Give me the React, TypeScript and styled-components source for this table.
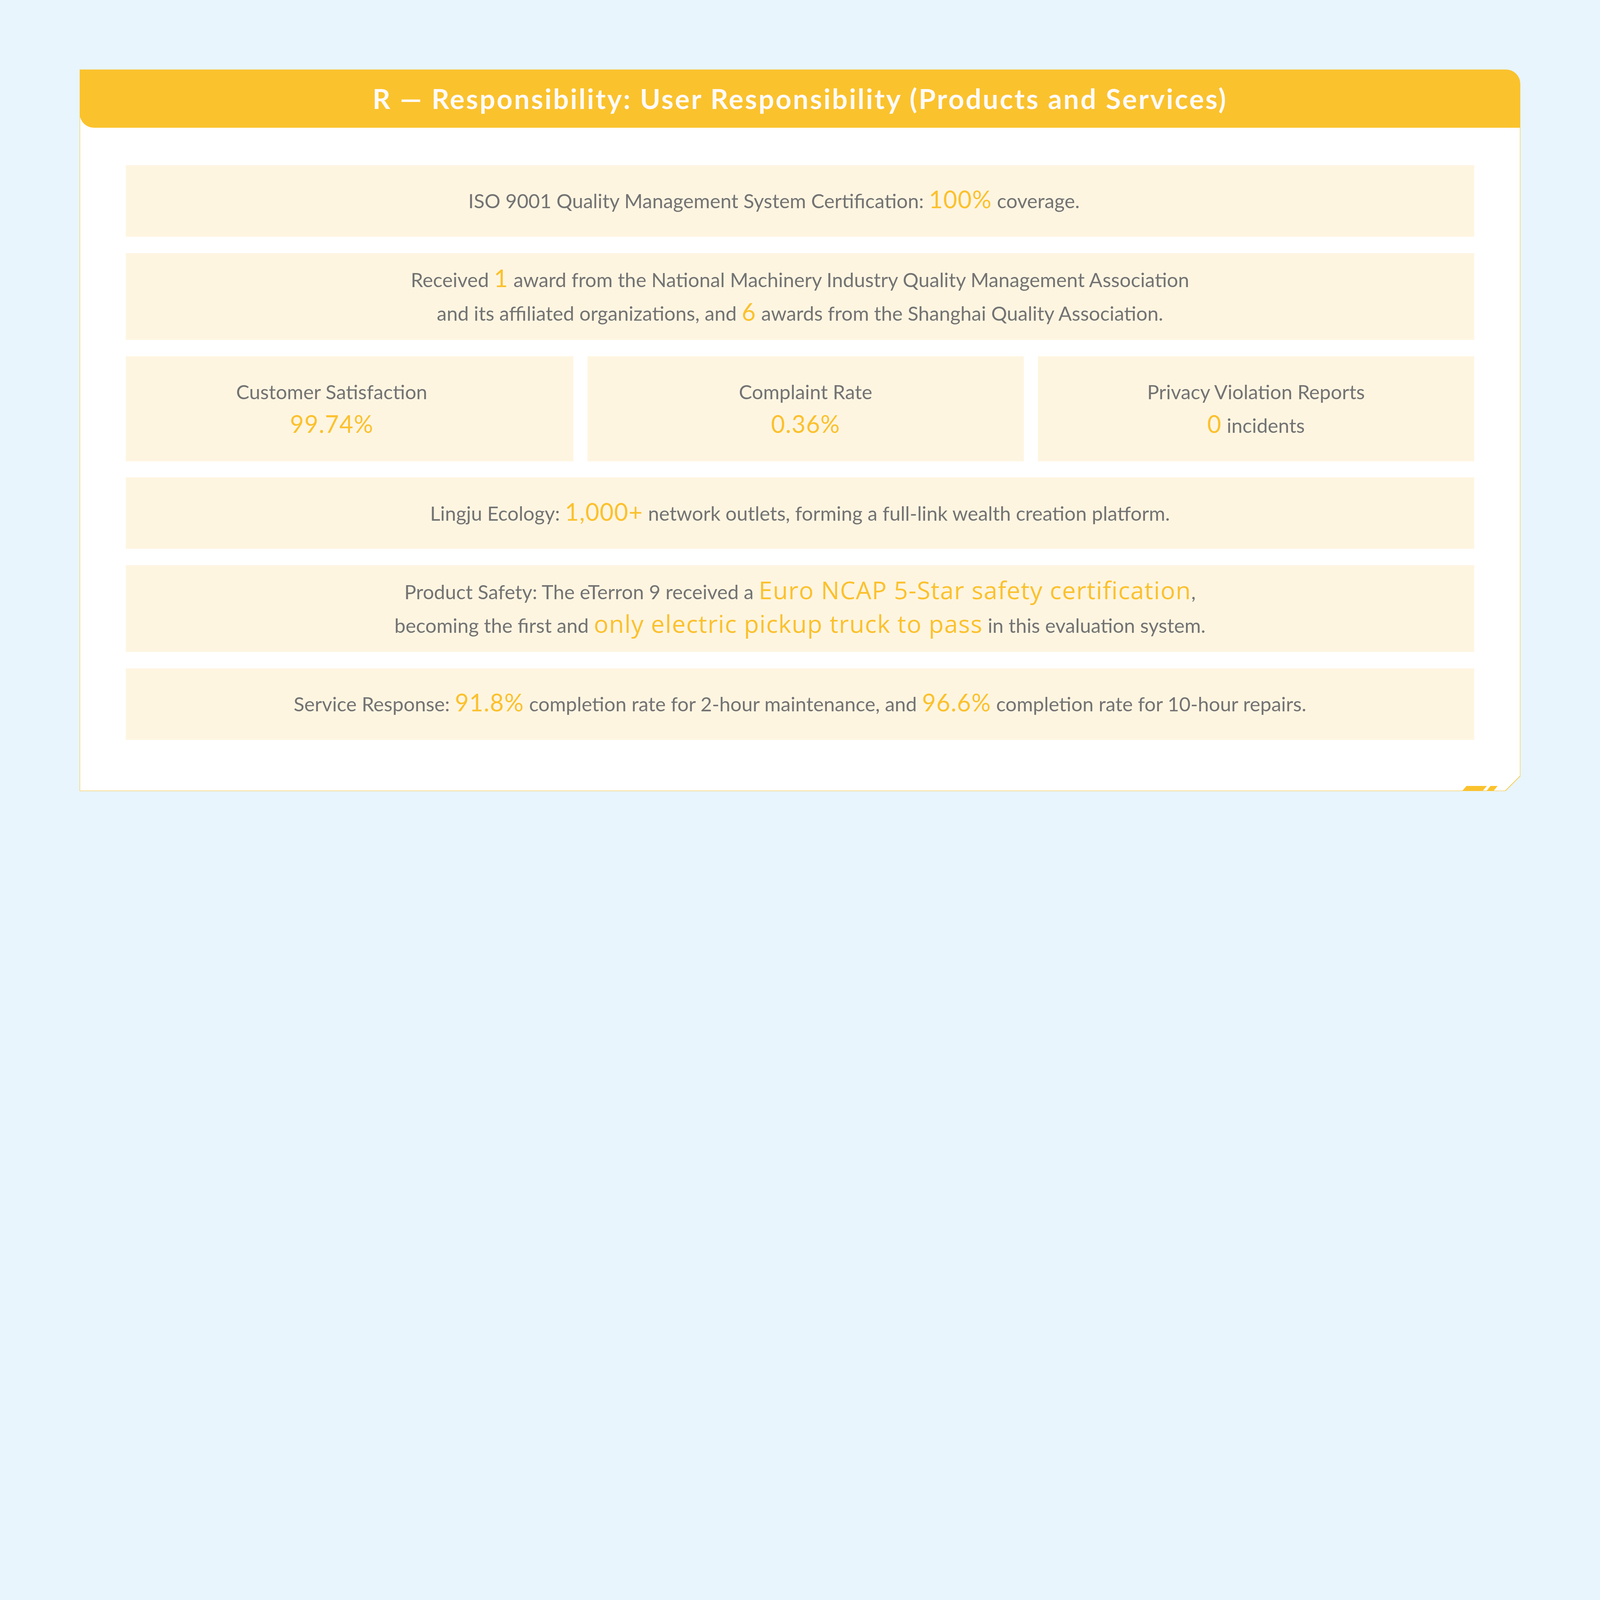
import { useEffect, useState } from "react";
import styled, { createGlobalStyle } from "styled-components";

const GlobalStyle = createGlobalStyle`
  html,
  body {
    margin: 0;
    padding: 0;
    background: #e8f5fd;
    overflow: hidden;
  }
  body {
    font-family: "Lato", "Noto Sans", sans-serif;
  }
`;

const BASE_WIDTH = 1568;

// The layout is drawn at 1568px and scaled to whatever width the window has.
const Page = styled.div`
  width: 1568px;
  height: 847px;
  box-sizing: border-box;
  padding: 68px 78px 0;
  background: #e8f5fd;
`;

const Card = styled.section`
  position: relative;
  width: 1412px;
  display: flex;
  flex-direction: column;
`;

const Header = styled.h2`
  position: relative;
  z-index: 1;
  margin: 0;
  height: 57px;
  display: flex;
  align-items: center;
  justify-content: center;
  background: #fac22d;
  border-radius: 0 14px 0 14px;
  color: #fffafa;
  font: 700 27px/1 "Lato", sans-serif;
  letter-spacing: 1.45px;
`;

const Body = styled.div`
  margin-top: -16px;
  padding: 53px 45px 50px;
  background: #ffffff;
  border: 0.3px solid #fac22d;
  border-top: none;
  clip-path: polygon(
    0 0,
    100% 0,
    100% calc(100% - 15px),
    calc(100% - 15px) 100%,
    0 100%
  );
  display: flex;
  flex-direction: column;
  gap: 16px;
`;

const Row = styled.div<{ $padRight?: number }>`
  min-height: 70px;
  box-sizing: border-box;
  padding: 9.5px ${(p) => p.$padRight ?? 20}px 9.5px 20px;
  display: flex;
  flex-direction: column;
  align-items: center;
  justify-content: center;
  background: #fef5e1;
  color: #737373;
  font-size: 19.4px;
  line-height: 33px;
  text-align: center;
`;

const Hi = styled.span<{ $word?: boolean }>`
  color: #fbc12d;
  font-size: ${(p) => (p.$word ? 24 : 23.5)}px;
  line-height: 1;
  font-family: ${(p) =>
    p.$word ? `"Open Sans", "Noto Sans", sans-serif` : "inherit"};
  letter-spacing: 0.5px;
`;

const StatGrid = styled.div`
  display: grid;
  grid-template-columns: 439fr 428fr 428fr;
  gap: 14px;
`;

const StatCell = styled.div<{ $padRight?: number }>`
  padding: 18.5px ${(p) => p.$padRight ?? 20}px 18.5px 20px;
  background: #fef5e1;
  color: #737373;
  font-size: 19.4px;
  line-height: 33px;
  text-align: center;
`;

const StatLabel = styled.div``;

const StatValue = styled.div``;

const Chamfer = styled.svg`
  position: absolute;
  right: 0;
  bottom: 0;
  width: 15px;
  height: 15px;
`;

const Stripes = styled.svg`
  position: absolute;
  left: 1355px;
  bottom: 0;
  width: 35px;
  height: 5px;
`;

function useFitZoom() {
  const read = () =>
    typeof document === "undefined"
      ? 1
      : document.documentElement.clientWidth / BASE_WIDTH;
  const [zoom, setZoom] = useState(read);
  useEffect(() => {
    const onResize = () => setZoom(read());
    window.addEventListener("resize", onResize);
    return () => window.removeEventListener("resize", onResize);
  }, []);
  return zoom;
}

export default function App() {
  const zoom = useFitZoom();
  return (
    <Page style={{ zoom }}>
      <GlobalStyle />
      <Card>
        <Header>R — Responsibility: User Responsibility (Products and Services)</Header>
        <Body>
          <Row $padRight={71}>
            <div>
              ISO 9001 Quality Management System Certification: <Hi>100%</Hi> coverage.
            </div>
          </Row>

          <Row>
            <div>
              Received <Hi>1</Hi> award from the National Machinery Industry Quality Management
              Association
            </div>
            <div>
              and its affiliated organizations, and <Hi>6</Hi> awards from the Shanghai Quality
              Association.
            </div>
          </Row>

          <StatGrid>
            <StatCell $padRight={55}>
              <StatLabel>Customer Satisfaction</StatLabel>
              <StatValue>
                <Hi>99.74%</Hi>
              </StatValue>
            </StatCell>
            <StatCell>
              <StatLabel>Complaint Rate</StatLabel>
              <StatValue>
                <Hi>0.36%</Hi>
              </StatValue>
            </StatCell>
            <StatCell>
              <StatLabel>Privacy Violation Reports</StatLabel>
              <StatValue>
                <Hi>0</Hi> incidents
              </StatValue>
            </StatCell>
          </StatGrid>

          <Row>
            <div>
              Lingju Ecology: <Hi>1,000+</Hi> network outlets, forming a full-link wealth creation
              platform.
            </div>
          </Row>

          <Row>
            <div>
              Product Safety: The eTerron 9 received a{" "}
              <Hi $word>Euro NCAP 5-Star safety certification</Hi>,
            </div>
            <div>
              becoming the first and <Hi $word>only electric pickup truck to pass</Hi> in this
              evaluation system.
            </div>
          </Row>

          <Row>
            <div>
              Service Response: <Hi>91.8%</Hi> completion rate for 2-hour maintenance, and{" "}
              <Hi>96.6%</Hi> completion rate for 10-hour repairs.
            </div>
          </Row>
        </Body>

        <Chamfer viewBox="0 0 15 15">
          <line x1="15" y1="0" x2="0" y2="15" stroke="#fac22d" strokeWidth="0.6" />
        </Chamfer>
        <Stripes viewBox="0 0 35 5">
          <path d="M0 5 L4.3 0 L24.3 0 L20 5 Z" fill="#fac22d" />
          <path d="M23.8 5 L27.8 0 L34.8 0 L30.7 5 Z" fill="#fac22d" />
        </Stripes>
      </Card>
    </Page>
  );
}
